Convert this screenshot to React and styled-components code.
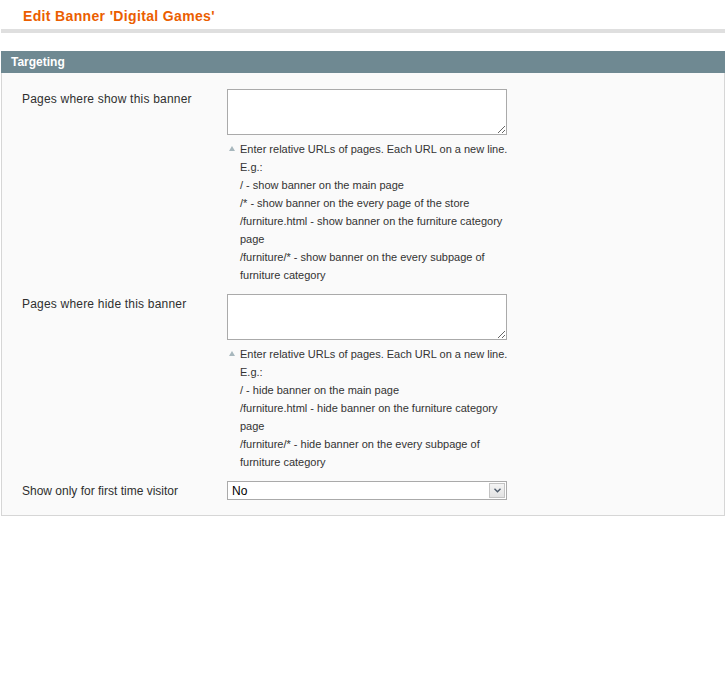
import React from "react"
import styled, { createGlobalStyle } from "styled-components"

const GlobalStyle = createGlobalStyle`
  html, body {
    margin: 0;
    padding: 0;
    background: #fff;
    font-family: Arial, "Liberation Sans", Helvetica, sans-serif;
    color: #2f2f2f;
  }
`

const Page = styled.div`
  width: 725px;
  padding-left: 1px;
  box-sizing: border-box;
`

const TitleBar = styled.div`
  padding: 8px 0 0 22px;
  height: 21px;
  border-bottom: 4px solid #dfdfdf;
  margin-bottom: 18px;
  h3 {
    margin: 0;
    font-size: 14px;
    line-height: 16px;
    font-weight: bold;
    letter-spacing: 0.35px;
    color: #eb5e00;
  }
`

const SectionHead = styled.div`
  background: #6f8992;
  height: 22px;
  padding: 0 10px;
  display: flex;
  align-items: center;
  h4 {
    margin: 0;
    font-size: 12px;
    font-weight: bold;
    color: #fff;
  }
`

const Fieldset = styled.div`
  background: #fafafa;
  border: 1px solid #d6d6d6;
  border-top: 0;
  padding: 10px 15px 11px 20px;
`

const Row = styled.div`
  display: grid;
  grid-template-columns: 205px 280px;
  padding: 6px 0 4px;
`

const Label = styled.label`
  font-size: 12px;
  line-height: 16px;
  padding-top: 2px;
  letter-spacing: ${(p) => (p.$tight ? "0" : "0.2px")};
  color: #2f2f2f;
`

const Area = styled.textarea`
  display: block;
  width: 280px;
  height: 46px;
  box-sizing: border-box;
  border: 1px solid #aaa;
  background: #fff;
  margin: 0;
  font: 12px Arial, "Liberation Sans", sans-serif;
`

const Note = styled.div`
  margin-top: 5px;
  padding-left: 13px;
  position: relative;
  font-size: 11px;
  line-height: 18px;
  color: #333;
  white-space: nowrap;
  &::before {
    content: "";
    position: absolute;
    left: 2px;
    top: 6px;
    border-left: 3px solid transparent;
    border-right: 3px solid transparent;
    border-bottom: 5px solid #a7b7bd;
  }
`

const Select = styled.div`
  display: flex;
  align-items: center;
  justify-content: space-between;
  width: 280px;
  height: 19px;
  box-sizing: border-box;
  border: 1px solid #aaa;
  background: #fff;
  padding: 0 1px 0 4px;
  font-size: 12px;
  color: #000;
`

const Arrow = styled.span`
  width: 16px;
  height: 15px;
  box-sizing: border-box;
  border: 1px solid #c3c3c3;
  background: linear-gradient(#f4f4f4, #e2e2e2);
  display: flex;
  align-items: center;
  justify-content: center;
`

const Chevron = () => (
  <svg width="7" height="5" viewBox="0 0 7 5">
    <path d="M0.5 0.8 L3.5 3.8 L6.5 0.8" fill="none" stroke="#4d5a6a" strokeWidth="1.4" />
  </svg>
)

const showLines = [
  "Enter relative URLs of pages. Each URL on a new line.",
  "E.g.:",
  "/ - show banner on the main page",
  "/* - show banner on the every page of the store",
  "/furniture.html - show banner on the furniture category",
  "page",
  "/furniture/* - show banner on the every subpage of",
  "furniture category",
]

const hideLines = [
  "Enter relative URLs of pages. Each URL on a new line.",
  "E.g.:",
  "/ - hide banner on the main page",
  "/furniture.html - hide banner on the furniture category",
  "page",
  "/furniture/* - hide banner on the every subpage of",
  "furniture category",
]

const App = () => {
  return (
    <Page>
      <GlobalStyle />
      <TitleBar>
        <h3>Edit Banner 'Digital Games'</h3>
      </TitleBar>
      <SectionHead>
        <h4>Targeting</h4>
      </SectionHead>
      <Fieldset>
        <Row>
          <Label>Pages where show this banner</Label>
          <div>
            <Area />
            <Note>
              {showLines.map((l, i) => (
                <div key={i}>{l}</div>
              ))}
            </Note>
          </div>
        </Row>
        <Row>
          <Label>Pages where hide this banner</Label>
          <div>
            <Area />
            <Note>
              {hideLines.map((l, i) => (
                <div key={i}>{l}</div>
              ))}
            </Note>
          </div>
        </Row>
        <Row>
          <Label $tight>Show only for first time visitor</Label>
          <Select>
            No
            <Arrow>
              <Chevron />
            </Arrow>
          </Select>
        </Row>
      </Fieldset>
    </Page>
  )
}

export default App
